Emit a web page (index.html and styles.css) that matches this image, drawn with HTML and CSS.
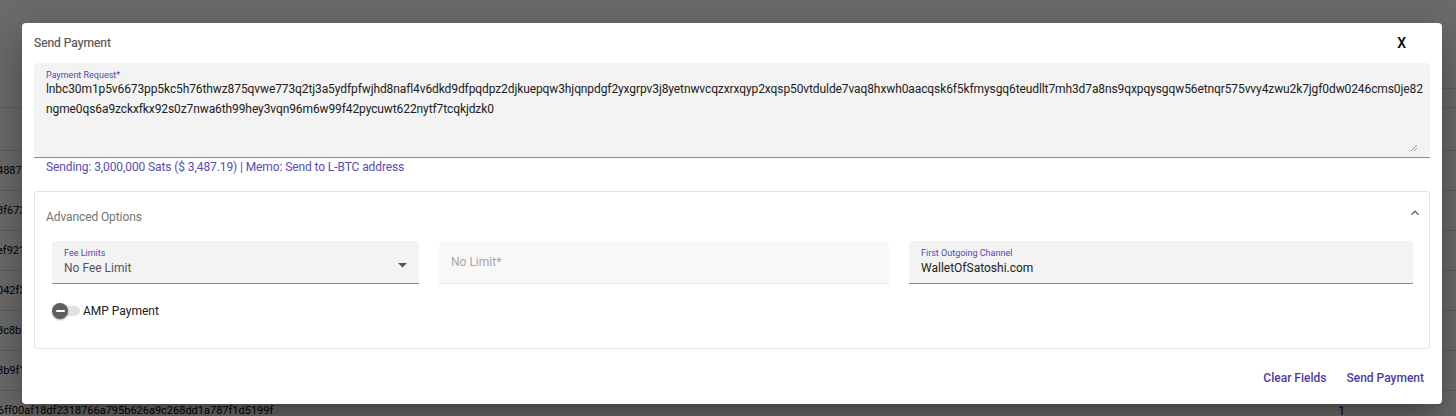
FILE: index.html
```html
<!DOCTYPE html>
<html lang="en">
<head>
<meta charset="utf-8">
<title>Send Payment</title>
<link rel="stylesheet" href="styles.css">
</head>
<body>
<div class="page">
  <div class="page-top"><div class="toolbar-line"></div></div>
  <div class="table">
    <div class="row row-first"></div>
    <div class="row"><span class="hash">4887c1d0a9b3e2f</span></div>
    <div class="row"><span class="hash">8f673a0c1d9e2b4</span></div>
    <div class="row"><span class="hash">ef921b7c0d3a5e8</span></div>
    <div class="row"><span class="hash">042f3b1a9c7d0e2</span></div>
    <div class="row"><span class="hash">3c8b5d7e1f09a2c</span></div>
    <div class="row"><span class="hash">3b9f1c2d4e6a8b0</span></div>
    <div class="row"><span class="hash hash-last">6ff00af18df2318766a795b626a9c268dd1a787f1d5199f</span><span class="count">1</span></div>
  </div>
</div>
<div class="backdrop"></div>

<div class="dialog">
  <div class="dialog-header">
    <h2 class="dialog-title">Send Payment</h2>
    <button class="close-btn">X</button>
  </div>

  <div class="dialog-body">
    <div class="filled-field textarea-field">
      <label class="field-label">Payment Request*</label>
      <div class="textarea-value">
        <span class="line">lnbc30m1p5v6673pp5kc5h76thwz875qvwe773q2tj3a5ydfpfwjhd8nafl4v6dkd9dfpqdpz2djkuepqw3hjqnpdgf2yxgrpv3j8yetnwvcqzxrxqyp2xqsp50vtdulde7vaq8hxwh0aacqsk6f5kfmysgq6teudllt7mh3d7a8ns9qxpqysgqw56etnqr575vvy4zwu2k7jgf0dw0246cms0je82</span>
        <span class="line">ngme0qs6a9zckxfkx92s0z7nwa6th99hey3vqn96m6w99f42pycuwt622nytf7tcqkjdzk0</span>
      </div>
      <svg class="resize-handle" width="8" height="8" viewBox="0 0 8 8"><path d="M7 1L1 7M7 4L4 7" stroke="#9a9a9a" stroke-width="1" fill="none"/></svg>
    </div>
    <div class="helper-text">Sending: 3,000,000 Sats ($ 3,487.19) | Memo: Send to L-BTC address</div>

    <div class="panel">
      <div class="panel-header">
        <span class="panel-title">Advanced Options</span>
        <svg class="chevron" width="16" height="16" viewBox="0 0 24 24"><path d="M7.41 15.41L12 10.83l4.59 4.58L18 14l-6-6-6 6z" fill="#666"/></svg>
      </div>
      <div class="panel-body">
        <div class="fields-row">
          <div class="filled-field select-field">
            <div class="field-stack">
              <label class="field-label">Fee Limits</label>
              <span class="field-value muted">No Fee Limit</span>
            </div>
            <svg class="select-arrow" width="9" height="5" viewBox="0 0 9 5"><path d="M0 0L4.5 4.5L9 0z" fill="#555"/></svg>
          </div>
          <div class="filled-field disabled-field">
            <span class="placeholder">No Limit*</span>
          </div>
          <div class="filled-field">
            <div class="field-stack">
              <label class="field-label">First Outgoing Channel</label>
              <span class="field-value">WalletOfSatoshi.com</span>
            </div>
          </div>
        </div>
        <div class="toggle-row">
          <span class="switch"><span class="track"></span><span class="thumb"><span class="bar"></span></span></span>
          <span class="toggle-label">AMP Payment</span>
        </div>
      </div>
    </div>
  </div>

  <div class="dialog-actions">
    <button class="text-btn">Clear Fields</button>
    <button class="text-btn">Send Payment</button>
  </div>
</div>
</body>
</html>
```

FILE: styles.css
```css
* { box-sizing: border-box; }
html, body { margin: 0; padding: 0; }
body {
  width: 1456px;
  height: 416px;
  overflow: hidden;
  position: relative;
  background: #fff;
  font-family: Roboto, "Noto Sans", Arial, sans-serif;
  color: #212121;
}

/* underlying page */
.page { width: 1456px; }
.page-top { height: 89px; display: flex; justify-content: flex-end; align-items: flex-end; }
.toolbar-line { width: 400px; border-bottom: 1px solid #e0e0e0; }
.table { padding-top: 18px; }
.row {
  height: 40px;
  border-top: 1px solid #e0e0e0;
  display: flex;
  align-items: center;
  font-size: 11px;
  color: #000;
  white-space: nowrap;
}
.row-first { height: 43px; }
.hash { margin-left: -3px; }
.hash-last { margin-left: -2px; }
.count { margin-left: auto; margin-right: 111px; font-size: 12px; }

.backdrop {
  position: absolute;
  inset: 0;
  background: rgba(0, 0, 0, 0.58);
}

/* dialog */
.dialog {
  position: absolute;
  left: 22px;
  top: 23px;
  width: 1420px;
  height: 381px;
  background: #fff;
  border-radius: 4px;
  box-shadow: 0 11px 15px -7px rgba(0,0,0,.2), 0 24px 38px 3px rgba(0,0,0,.14), 0 9px 46px 8px rgba(0,0,0,.12);
  display: flex;
  flex-direction: column;
}
.dialog-header {
  height: 40px;
  display: flex;
  align-items: center;
  justify-content: space-between;
  padding: 0 12px;
}
.dialog-title {
  margin: 0;
  font-size: 12px;
  font-weight: 400;
  color: #555;
  -webkit-text-stroke: 0.2px #555;
}
.close-btn {
  border: 0;
  background: none;
  padding: 0;
  margin-right: 24px;
  font-family: inherit;
  font-size: 14px;
  font-weight: 500;
  color: #000;
}

.dialog-body { padding: 0 12px; }

.filled-field {
  position: relative;
  background: #f3f3f3;
  border-bottom: 1px solid #8c8c8c;
  border-radius: 4px 4px 0 0;
}
.field-label {
  display: block;
  font-size: 9px;
  line-height: 11px;
  color: #5446b3;
}
.textarea-field {
  height: 95px;
  padding: 7px 12px 0;
}
.textarea-field .field-label { margin-bottom: -2px; }
.textarea-value {
  font-size: 12px;
  line-height: 20px;
  letter-spacing: -0.1px;
  color: #212121;
}
.line { display: block; white-space: nowrap; }
.resize-handle { position: absolute; right: 12px; bottom: 5px; }

.helper-text {
  padding: 1px 12px 0;
  font-size: 12px;
  line-height: 16px;
  letter-spacing: -0.1px;
  color: #5a4bb5;
}

.panel {
  margin-top: 16px;
  border: 1px solid #e3e3e3;
  border-radius: 3px;
}
.panel-header {
  height: 49px;
  padding: 0 6px 0 11px;
  display: flex;
  align-items: center;
  justify-content: space-between;
}
.panel-title { font-size: 12px; color: #757575; letter-spacing: -0.1px; }
.chevron { margin-top: -8px; }

.panel-body { padding: 0 16px 26px 17px; }
.fields-row {
  display: grid;
  grid-template-columns: 367px 450px 1fr;
  gap: 20px;
}
.fields-row .filled-field {
  height: 43px;
  padding: 7px 12px 0;
}
.select-field {
  display: flex;
  justify-content: space-between;
  align-items: flex-start;
}
.select-arrow { margin-top: 15px; margin-right: 0; }
.field-value {
  display: block;
  font-size: 12px;
  line-height: 16px;
  margin-top: 1px;
  color: #212121;
}
.field-value.muted { color: #555; }
.fields-row .disabled-field {
  background: #f8f8f8;
  border-bottom: 1px solid #e6e6e6;
  display: flex;
  align-items: center;
  padding-top: 0;
}
.placeholder { font-size: 12px; color: #a6a6a6; }

.toggle-row {
  margin-top: 16px;
  height: 22px;
  display: flex;
  align-items: center;
}
.switch {
  position: relative;
  width: 29px;
  height: 16px;
  display: inline-block;
}
.track {
  position: absolute;
  left: 8px;
  top: 3px;
  width: 20px;
  height: 10px;
  border-radius: 5px;
  background: #e2e2e2;
}
.thumb {
  position: absolute;
  left: 0;
  top: 0;
  width: 16px;
  height: 16px;
  border-radius: 50%;
  background: #5f5f5f;
  display: flex;
  align-items: center;
  justify-content: center;
  box-shadow: 0 1px 2px rgba(0,0,0,.3);
}
.bar { width: 9px; height: 2px; background: #fff; border-radius: 1px; }
.toggle-label { margin-left: 2px; font-size: 12px; color: #212121; }

.dialog-actions {
  margin-top: auto;
  padding: 0 18px 17px 0;
  display: flex;
  justify-content: flex-end;
  gap: 20px;
}
.text-btn {
  border: 0;
  background: none;
  padding: 0;
  height: 18px;
  font-family: inherit;
  font-size: 12px;
  font-weight: 500;
  color: #4b3ca9;
}
```
